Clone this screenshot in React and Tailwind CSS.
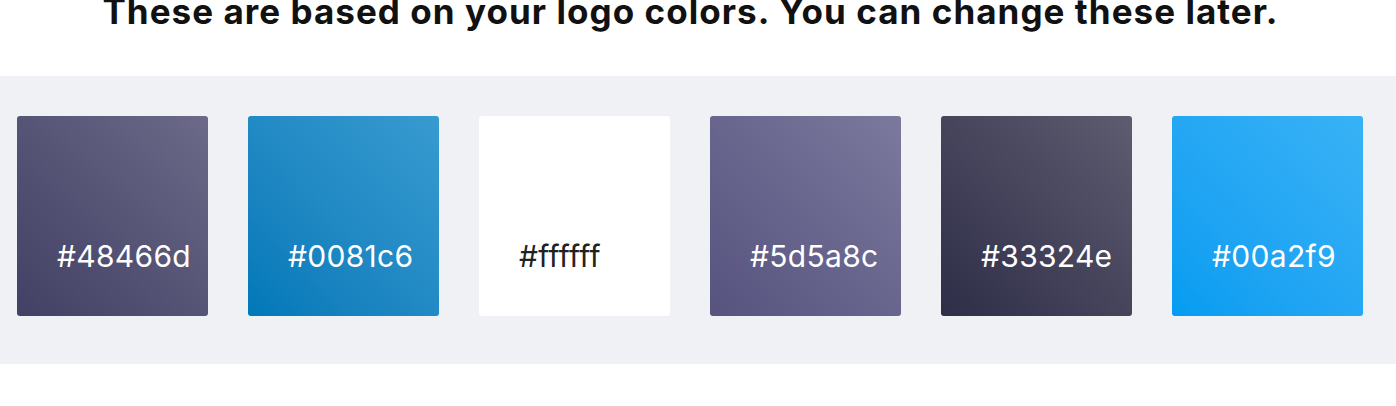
const colors = [
  { hex: '#48466d', bg: 'bg-gradient-to-tr from-[#424064] to-[#6c6a88]', text: 'text-white' },
  { hex: '#0081c6', bg: 'bg-gradient-to-tr from-[#0078b8] to-[#379bd0]', text: 'text-white' },
  { hex: '#ffffff', bg: 'bg-white', text: 'text-[#222]' },
  { hex: '#5d5a8c', bg: 'bg-gradient-to-tr from-[#56537f] to-[#7b799c]', text: 'text-white' },
  { hex: '#33324e', bg: 'bg-gradient-to-tr from-[#2f2e48] to-[#5e5c70]', text: 'text-white' },
  { hex: '#00a2f9', bg: 'bg-gradient-to-tr from-[#039cf1] to-[#38b2f6]', text: 'text-white' },
]

export default function App() {
  return (
    <div className="w-[1396px] h-[406px] overflow-hidden bg-white font-['Inter',sans-serif]">
      <div className="h-[76px] flex flex-col justify-end">
        <h2 className="mb-[47px] pr-[15px] text-center text-[35px] leading-none font-bold text-[#111] tracking-[1.05px] whitespace-nowrap">
          These are based on your logo colors. You can change these later.
        </h2>
      </div>

      <div className="bg-[#f0f1f5] pt-10 pb-[48px] pl-[17px]">
        <div className="flex gap-10">
          {colors.map((c) => (
            <div
              key={c.hex}
              className={`w-[191px] h-[200px] shrink-0 rounded-[3px] flex items-end pl-10 pb-[44px] ${c.bg}`}
            >
              <span className={`text-[30px] leading-8 tracking-[0.3px] ${c.text}`}>{c.hex}</span>
            </div>
          ))}
        </div>
      </div>
    </div>
  )
}
